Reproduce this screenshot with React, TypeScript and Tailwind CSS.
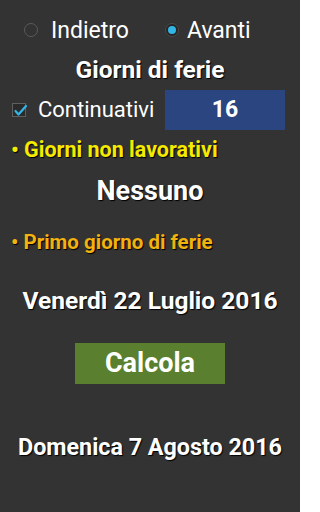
import React from "react";

const shadow = "[text-shadow:1px_1px_1px_#000]";

export default function App() {
  return (
    <div
      className="w-[300px] h-[512px] bg-[#333333] text-white flex flex-col overflow-hidden"
      style={{ fontFamily: "Roboto, 'Noto Sans', sans-serif" }}
    >
      {/* radios */}
      <div className="h-[60px] flex items-center">
        <div className="flex items-center ml-[24px]">
          <span className="w-[14px] h-[14px] rounded-full border-[1.5px] border-[#5a5a5a]" />
          <span className="ml-[13px] text-[23px] leading-none">Indietro</span>
        </div>
        <div className="flex items-center ml-[36px]">
          <span className="w-[14px] h-[14px] rounded-full border-[1.5px] border-[#4a4a4a] bg-[#262626] flex items-center justify-center">
            <span className="w-[8px] h-[8px] rounded-full bg-[#33b5e5]" />
          </span>
          <span className="ml-[8px] text-[23px] leading-none">Avanti</span>
        </div>
      </div>

      <div className={`h-[20px] flex items-center justify-center text-[24.5px] font-bold ${shadow}`}>
        Giorni di ferie
      </div>

      <div className="mt-[10px] h-[40px] flex items-center">
        <span className="relative ml-[12px] w-[14px] h-[14px] border border-[#5f5f5f] bg-[#2a2a2a]">
          <svg className="absolute left-0 top-0 overflow-visible" width="14" height="14" viewBox="0 0 14 14">
            <path d="M2.5 7 L5.5 10.5 L13 2" stroke="#33b5e5" strokeWidth="2.2" fill="none" strokeLinecap="round" strokeLinejoin="round" />
          </svg>
        </span>
        <span className="ml-[12px] text-[22px] leading-none">Continuativi</span>
        <div className="ml-auto mr-[15px] w-[120px] h-[40px] bg-[#2a4580] flex items-center justify-center text-[23px] font-bold">
          16
        </div>
      </div>

      <div className={`h-[40px] flex items-center pl-[11px] text-[21.5px] font-bold text-[#f5ea00] ${shadow}`}>
        • Giorni non lavorativi
      </div>

      <div className={`h-[42px] flex items-center justify-center text-[27px] font-bold ${shadow}`}>
        Nessuno
      </div>

      <div className={`h-[60px] flex items-center pl-[11px] text-[20.5px] font-bold text-[#f2b20f] ${shadow}`}>
        • Primo giorno di ferie
      </div>

      <div className={`h-[58px] flex items-center justify-center text-[24.5px] font-bold ${shadow}`}>
        Venerdì 22 Luglio 2016
      </div>

      <div className="mt-[13px] flex justify-center">
        <div className="w-[150px] h-[41px] bg-[#5a7f2e] flex items-center justify-center text-[27px] font-bold">
          Calcola
        </div>
      </div>

      <div className={`h-[126px] flex items-center justify-center text-[23.3px] font-bold ${shadow}`}>
        Domenica 7 Agosto 2016
      </div>
    </div>
  );
}
